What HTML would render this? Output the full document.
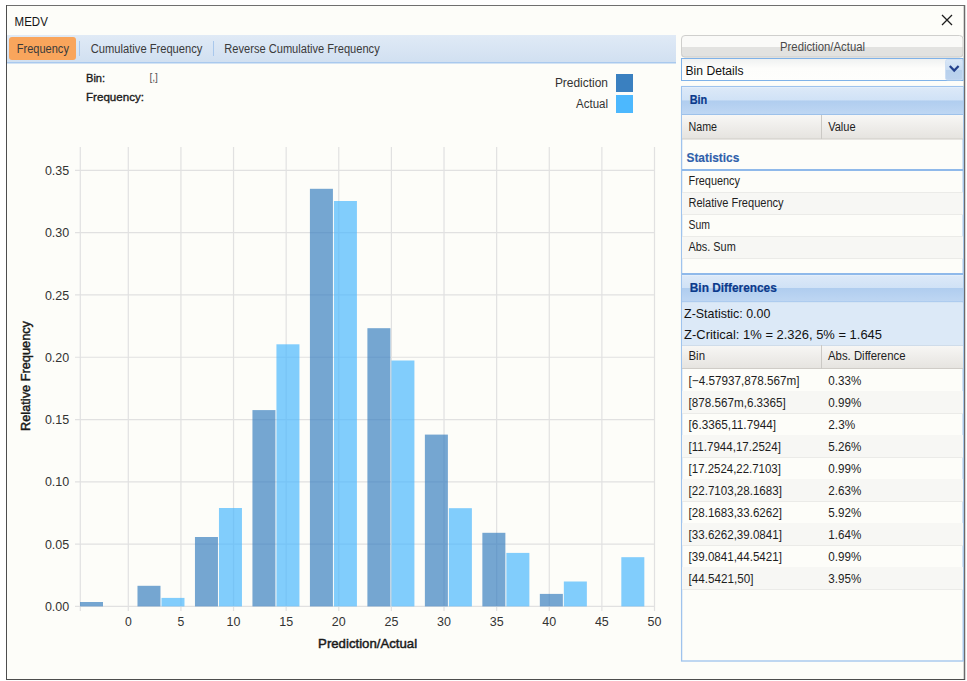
<!DOCTYPE html>
<html><head><meta charset="utf-8"><title>MEDV</title>
<style>html,body{margin:0;padding:0;background:#fff;overflow:hidden;}svg{display:block;font-family:"Liberation Sans", sans-serif;}</style>
</head><body>
<svg width="967" height="681" viewBox="0 0 967 681">
<rect x="0" y="0" width="967" height="681" fill="#ffffff" />
<rect x="6" y="5" width="959" height="675" fill="#fdfdf9" />
<line x1="6" y1="5.5" x2="965" y2="5.5" stroke="#6f6f6f" stroke-width="1" />
<line x1="6.5" y1="5" x2="6.5" y2="680" stroke="#4d4d4d" stroke-width="1" />
<line x1="964.5" y1="5" x2="964.5" y2="680" stroke="#6a6a6a" stroke-width="1.5" />
<line x1="6" y1="679.5" x2="965" y2="679.5" stroke="#4d4d4d" stroke-width="1" />
<text x="14.6" y="25.5" font-size="13" fill="#151515" font-weight="normal" text-anchor="start" textLength="33.2" lengthAdjust="spacingAndGlyphs" >MEDV</text>
<path d="M942,15 L952,25 M952,15 L942,25" stroke="#1e1e1e" stroke-width="1.3" fill="none"/>
<linearGradient id="gtab" x1="0" y1="0" x2="0" y2="1"><stop offset="0" stop-color="#e0eaf6"/><stop offset="1" stop-color="#d1e0f1"/></linearGradient>
<rect x="7" y="35" width="669" height="27" fill="url(#gtab)" />
<rect x="7" y="62" width="669" height="1.5" fill="#a9c9ee" />
<rect x="9" y="37" width="67" height="23" rx="3" ry="3" fill="#f9a55c"/>
<text x="16.8" y="52.8" font-size="12" fill="#3a3a3a" font-weight="normal" text-anchor="start" textLength="52.1" lengthAdjust="spacingAndGlyphs" >Frequency</text>
<line x1="79.5" y1="41" x2="79.5" y2="56" stroke="#a9c8ec" stroke-width="1" />
<text x="90.8" y="52.8" font-size="12" fill="#3a3a3a" font-weight="normal" text-anchor="start" textLength="111.6" lengthAdjust="spacingAndGlyphs" >Cumulative Frequency</text>
<line x1="213.5" y1="41" x2="213.5" y2="56" stroke="#a9c8ec" stroke-width="1" />
<text x="224.3" y="52.8" font-size="12" fill="#3a3a3a" font-weight="normal" text-anchor="start" textLength="155.4" lengthAdjust="spacingAndGlyphs" >Reverse Cumulative Frequency</text>
<text x="86" y="81.6" font-size="11.8" fill="#1a1a1a" font-weight="normal" text-anchor="start" textLength="19.1" lengthAdjust="spacingAndGlyphs"  stroke="#1a1a1a" stroke-width="0.35">Bin:</text>
<text x="149.4" y="81.2" font-size="11" fill="#555" font-weight="normal" text-anchor="start" textLength="8.6" lengthAdjust="spacingAndGlyphs" >[,]</text>
<text x="86" y="100.8" font-size="11.8" fill="#1a1a1a" font-weight="normal" text-anchor="start" textLength="58" lengthAdjust="spacingAndGlyphs"  stroke="#1a1a1a" stroke-width="0.35">Frequency:</text>
<rect x="616" y="74" width="17" height="18" fill="#3a80c0" />
<rect x="616" y="95" width="17" height="18" fill="#4cb8fe" />
<text x="608" y="87.3" font-size="12" fill="#333" font-weight="normal" text-anchor="end" textLength="53.1" lengthAdjust="spacingAndGlyphs" >Prediction</text>
<text x="608" y="108.4" font-size="12" fill="#333" font-weight="normal" text-anchor="end" textLength="32" lengthAdjust="spacingAndGlyphs" >Actual</text>
<line x1="128.3" y1="147" x2="128.3" y2="611" stroke="#e1e1e1" stroke-width="1.2" />
<line x1="180.92" y1="147" x2="180.92" y2="611" stroke="#e1e1e1" stroke-width="1.2" />
<line x1="233.54" y1="147" x2="233.54" y2="611" stroke="#e1e1e1" stroke-width="1.2" />
<line x1="286.16" y1="147" x2="286.16" y2="611" stroke="#e1e1e1" stroke-width="1.2" />
<line x1="338.78" y1="147" x2="338.78" y2="611" stroke="#e1e1e1" stroke-width="1.2" />
<line x1="391.4" y1="147" x2="391.4" y2="611" stroke="#e1e1e1" stroke-width="1.2" />
<line x1="444.02" y1="147" x2="444.02" y2="611" stroke="#e1e1e1" stroke-width="1.2" />
<line x1="496.64" y1="147" x2="496.64" y2="611" stroke="#e1e1e1" stroke-width="1.2" />
<line x1="549.26" y1="147" x2="549.26" y2="611" stroke="#e1e1e1" stroke-width="1.2" />
<line x1="601.88" y1="147" x2="601.88" y2="611" stroke="#e1e1e1" stroke-width="1.2" />
<line x1="654.5" y1="147" x2="654.5" y2="611" stroke="#e1e1e1" stroke-width="1.2" />
<line x1="80.3" y1="147" x2="80.3" y2="611" stroke="#e1e1e1" stroke-width="1.2" />
<line x1="75" y1="606.4" x2="654.5" y2="606.4" stroke="#e1e1e1" stroke-width="1.2" />
<line x1="75" y1="544.11" x2="654.5" y2="544.11" stroke="#e1e1e1" stroke-width="1.2" />
<line x1="75" y1="481.82" x2="654.5" y2="481.82" stroke="#e1e1e1" stroke-width="1.2" />
<line x1="75" y1="419.53" x2="654.5" y2="419.53" stroke="#e1e1e1" stroke-width="1.2" />
<line x1="75" y1="357.24" x2="654.5" y2="357.24" stroke="#e1e1e1" stroke-width="1.2" />
<line x1="75" y1="294.95" x2="654.5" y2="294.95" stroke="#e1e1e1" stroke-width="1.2" />
<line x1="75" y1="232.66" x2="654.5" y2="232.66" stroke="#e1e1e1" stroke-width="1.2" />
<line x1="75" y1="170.37" x2="654.5" y2="170.37" stroke="#e1e1e1" stroke-width="1.2" />
<rect x="80.00" y="602.0" width="23" height="4.40" fill="#3a80c0" fill-opacity="0.7"/>
<rect x="137.48" y="585.8" width="23" height="20.60" fill="#3a80c0" fill-opacity="0.7"/>
<rect x="161.48" y="597.9" width="23" height="8.50" fill="#4cb8fe" fill-opacity="0.7"/>
<rect x="194.96" y="537.0" width="23" height="69.40" fill="#3a80c0" fill-opacity="0.7"/>
<rect x="218.96" y="508.0" width="23" height="98.40" fill="#4cb8fe" fill-opacity="0.7"/>
<rect x="252.44" y="410.1" width="23" height="196.30" fill="#3a80c0" fill-opacity="0.7"/>
<rect x="276.44" y="344.3" width="23" height="262.10" fill="#4cb8fe" fill-opacity="0.7"/>
<rect x="309.92" y="188.8" width="23" height="417.60" fill="#3a80c0" fill-opacity="0.7"/>
<rect x="333.92" y="201.0" width="23" height="405.40" fill="#4cb8fe" fill-opacity="0.7"/>
<rect x="367.40" y="328.2" width="23" height="278.20" fill="#3a80c0" fill-opacity="0.7"/>
<rect x="391.40" y="360.5" width="23" height="245.90" fill="#4cb8fe" fill-opacity="0.7"/>
<rect x="424.88" y="434.6" width="23" height="171.80" fill="#3a80c0" fill-opacity="0.7"/>
<rect x="448.88" y="508.2" width="23" height="98.20" fill="#4cb8fe" fill-opacity="0.7"/>
<rect x="482.36" y="532.8" width="23" height="73.60" fill="#3a80c0" fill-opacity="0.7"/>
<rect x="506.36" y="552.9" width="23" height="53.50" fill="#4cb8fe" fill-opacity="0.7"/>
<rect x="539.84" y="593.9" width="23" height="12.50" fill="#3a80c0" fill-opacity="0.7"/>
<rect x="563.84" y="581.5" width="23" height="24.90" fill="#4cb8fe" fill-opacity="0.7"/>
<rect x="621.32" y="557.2" width="23" height="49.20" fill="#4cb8fe" fill-opacity="0.7"/>
<text x="69.2" y="611.0" font-size="13.4" fill="#333" font-weight="normal" text-anchor="end" textLength="24.3" lengthAdjust="spacingAndGlyphs" >0.00</text>
<text x="69.2" y="548.71" font-size="13.4" fill="#333" font-weight="normal" text-anchor="end" textLength="24.3" lengthAdjust="spacingAndGlyphs" >0.05</text>
<text x="69.2" y="486.42" font-size="13.4" fill="#333" font-weight="normal" text-anchor="end" textLength="24.3" lengthAdjust="spacingAndGlyphs" >0.10</text>
<text x="69.2" y="424.13" font-size="13.4" fill="#333" font-weight="normal" text-anchor="end" textLength="24.3" lengthAdjust="spacingAndGlyphs" >0.15</text>
<text x="69.2" y="361.84" font-size="13.4" fill="#333" font-weight="normal" text-anchor="end" textLength="24.3" lengthAdjust="spacingAndGlyphs" >0.20</text>
<text x="69.2" y="299.55" font-size="13.4" fill="#333" font-weight="normal" text-anchor="end" textLength="24.3" lengthAdjust="spacingAndGlyphs" >0.25</text>
<text x="69.2" y="237.26" font-size="13.4" fill="#333" font-weight="normal" text-anchor="end" textLength="24.3" lengthAdjust="spacingAndGlyphs" >0.30</text>
<text x="69.2" y="174.97" font-size="13.4" fill="#333" font-weight="normal" text-anchor="end" textLength="24.3" lengthAdjust="spacingAndGlyphs" >0.35</text>
<text x="128.3" y="625.9" font-size="12.2" fill="#333" font-weight="normal" text-anchor="middle" textLength="6.8" lengthAdjust="spacingAndGlyphs" >0</text>
<text x="180.92" y="625.9" font-size="12.2" fill="#333" font-weight="normal" text-anchor="middle" textLength="6.8" lengthAdjust="spacingAndGlyphs" >5</text>
<text x="233.54" y="625.9" font-size="12.2" fill="#333" font-weight="normal" text-anchor="middle" textLength="13.9" lengthAdjust="spacingAndGlyphs" >10</text>
<text x="286.16" y="625.9" font-size="12.2" fill="#333" font-weight="normal" text-anchor="middle" textLength="13.9" lengthAdjust="spacingAndGlyphs" >15</text>
<text x="338.78" y="625.9" font-size="12.2" fill="#333" font-weight="normal" text-anchor="middle" textLength="13.9" lengthAdjust="spacingAndGlyphs" >20</text>
<text x="391.4" y="625.9" font-size="12.2" fill="#333" font-weight="normal" text-anchor="middle" textLength="13.9" lengthAdjust="spacingAndGlyphs" >25</text>
<text x="444.02" y="625.9" font-size="12.2" fill="#333" font-weight="normal" text-anchor="middle" textLength="13.9" lengthAdjust="spacingAndGlyphs" >30</text>
<text x="496.64" y="625.9" font-size="12.2" fill="#333" font-weight="normal" text-anchor="middle" textLength="13.9" lengthAdjust="spacingAndGlyphs" >35</text>
<text x="549.26" y="625.9" font-size="12.2" fill="#333" font-weight="normal" text-anchor="middle" textLength="13.9" lengthAdjust="spacingAndGlyphs" >40</text>
<text x="601.88" y="625.9" font-size="12.2" fill="#333" font-weight="normal" text-anchor="middle" textLength="13.9" lengthAdjust="spacingAndGlyphs" >45</text>
<text x="654.5" y="625.9" font-size="12.2" fill="#333" font-weight="normal" text-anchor="middle" textLength="13.9" lengthAdjust="spacingAndGlyphs" >50</text>
<text x="318.1" y="648.4" font-size="13" fill="#1a1a1a" font-weight="normal" text-anchor="start" textLength="99" lengthAdjust="spacingAndGlyphs"  stroke="#1a1a1a" stroke-width="0.45">Prediction/Actual</text>
<text transform="translate(30.2,431) rotate(-90)" x="0" y="0" font-size="13" fill="#1a1a1a" stroke="#1a1a1a" stroke-width="0.45" textLength="110" lengthAdjust="spacingAndGlyphs">Relative Frequency</text>
<defs><linearGradient id="gbin" x1="0" y1="0" x2="0" y2="1"><stop offset="0" stop-color="#dde9f8"/><stop offset="0.48" stop-color="#d0e2f6"/><stop offset="0.5" stop-color="#b0cdef"/><stop offset="1" stop-color="#bfd7f3"/></linearGradient><linearGradient id="ghdr" x1="0" y1="0" x2="0" y2="1"><stop offset="0" stop-color="#f8f7f5"/><stop offset="1" stop-color="#e5e3df"/></linearGradient><linearGradient id="gdd" x1="0" y1="0" x2="0" y2="1"><stop offset="0" stop-color="#d9e7f7"/><stop offset="0.5" stop-color="#c9dcf2"/><stop offset="0.5" stop-color="#b7d0ec"/><stop offset="1" stop-color="#bcd3ee"/></linearGradient></defs>
<clipPath id="chb"><rect x="681" y="35" width="282.5" height="22.5" rx="3.5"/></clipPath>
<g clip-path="url(#chb)"><rect x="681" y="35" width="283" height="23" fill="#fafaf8"/><rect x="681" y="47" width="283" height="11" fill="#e2e2e0"/></g>
<rect x="681.5" y="35.5" width="281.5" height="21.5" rx="3.5" fill="none" stroke="#cfcfcd" stroke-width="1"/>
<text x="780" y="50.7" font-size="12" fill="#4a4a4a" font-weight="normal" text-anchor="start" textLength="85" lengthAdjust="spacingAndGlyphs" >Prediction/Actual</text>
<linearGradient id="gcb" x1="0" y1="0" x2="0" y2="1"><stop offset="0" stop-color="#eff1f1"/><stop offset="0.45" stop-color="#fdfdfb"/><stop offset="1" stop-color="#fefefc"/></linearGradient>
<rect x="681.5" y="58.5" width="281.5" height="22" fill="url(#gcb)" stroke="#7fb2e8" stroke-width="1"/>
<rect x="945.5" y="59.5" width="17" height="20.5" rx="2" fill="url(#gdd)" stroke="#c9dcf2" stroke-width="0.8"/>
<polyline points="949.8,66 954.2,70.6 958.6,66" fill="none" stroke="#23408c" stroke-width="2.2"/>
<text x="685.5" y="74.5" font-size="12.3" fill="#111" font-weight="normal" text-anchor="start" textLength="58" lengthAdjust="spacingAndGlyphs" >Bin Details</text>
<rect x="681.6" y="86.6" width="281.6" height="574.4" fill="#fdfdf9" stroke="#9fc3ed" stroke-width="1.3"/>
<rect x="682" y="87" width="281" height="27.5" fill="url(#gbin)" />
<rect x="682" y="87" width="281" height="1" fill="#e3eefa" />
<line x1="682" y1="114.5" x2="963" y2="114.5" stroke="#9dc1ea" stroke-width="1" />
<text x="689.7" y="104.2" font-size="12" fill="#0b3a8c" font-weight="bold" text-anchor="start" textLength="17.6" lengthAdjust="spacingAndGlyphs"  stroke="#0b3a8c" stroke-width="0.2">Bin</text>
<rect x="682" y="115" width="281" height="24" fill="url(#ghdr)" />
<line x1="682" y1="139" x2="963" y2="139" stroke="#cfccc7" stroke-width="1" />
<line x1="821.5" y1="115" x2="821.5" y2="139" stroke="#cbc9c5" stroke-width="1" />
<text x="688.5" y="130.7" font-size="12.3" fill="#1e1e1e" font-weight="normal" text-anchor="start" textLength="28.5" lengthAdjust="spacingAndGlyphs" >Name</text>
<text x="828.2" y="130.8" font-size="12.3" fill="#1e1e1e" font-weight="normal" text-anchor="start" textLength="27.4" lengthAdjust="spacingAndGlyphs" >Value</text>
<text x="686.5" y="161.8" font-size="12" fill="#2f5fab" font-weight="bold" text-anchor="start" textLength="52.8" lengthAdjust="spacingAndGlyphs"  stroke="#2f5fab" stroke-width="0.15">Statistics</text>
<rect x="682" y="169" width="281" height="2" fill="#8fb9ea" />
<line x1="682" y1="192.5" x2="963" y2="192.5" stroke="#ebebe8" stroke-width="1" />
<text x="688.5" y="185.2" font-size="12.3" fill="#1e1e1e" font-weight="normal" text-anchor="start" textLength="51.5" lengthAdjust="spacingAndGlyphs" >Frequency</text>
<rect x="682" y="193" width="281" height="21" fill="#f7f7f4" />
<line x1="682" y1="214.5" x2="963" y2="214.5" stroke="#ebebe8" stroke-width="1" />
<text x="688.5" y="207.2" font-size="12.3" fill="#1e1e1e" font-weight="normal" text-anchor="start" textLength="95.1" lengthAdjust="spacingAndGlyphs" >Relative Frequency</text>
<line x1="682" y1="236.5" x2="963" y2="236.5" stroke="#ebebe8" stroke-width="1" />
<text x="688.5" y="229.2" font-size="12.3" fill="#1e1e1e" font-weight="normal" text-anchor="start" textLength="21.5" lengthAdjust="spacingAndGlyphs" >Sum</text>
<rect x="682" y="237" width="281" height="21" fill="#f7f7f4" />
<line x1="682" y1="258.5" x2="963" y2="258.5" stroke="#ebebe8" stroke-width="1" />
<text x="688.5" y="251.2" font-size="12.3" fill="#1e1e1e" font-weight="normal" text-anchor="start" textLength="47.2" lengthAdjust="spacingAndGlyphs" >Abs. Sum</text>
<rect x="682" y="273" width="281" height="2" fill="#8fb9ea" />
<rect x="682" y="275" width="281" height="27" fill="url(#gbin)" />
<rect x="682" y="275" width="281" height="1" fill="#e3eefa" />
<line x1="682" y1="302" x2="963" y2="302" stroke="#9dc1ea" stroke-width="1" />
<text x="689.8" y="292.2" font-size="12" fill="#0b3a8c" font-weight="bold" text-anchor="start" textLength="87" lengthAdjust="spacingAndGlyphs"  stroke="#0b3a8c" stroke-width="0.2">Bin Differences</text>
<rect x="682" y="302.5" width="281" height="42.5" fill="#dce9f7" />
<text x="684.1" y="318.2" font-size="12.8" fill="#111" font-weight="normal" text-anchor="start" textLength="86.3" lengthAdjust="spacingAndGlyphs" >Z-Statistic: 0.00</text>
<text x="684.1" y="338.8" font-size="12.8" fill="#111" font-weight="normal" text-anchor="start" textLength="197.9" lengthAdjust="spacingAndGlyphs" >Z-Critical: 1% = 2.326, 5% = 1.645</text>
<rect x="682" y="345" width="281" height="24" fill="url(#ghdr)" />
<line x1="682" y1="345.5" x2="963" y2="345.5" stroke="#cfdcea" stroke-width="1" />
<line x1="682" y1="368.5" x2="963" y2="368.5" stroke="#cfccc7" stroke-width="1" />
<line x1="821.5" y1="345" x2="821.5" y2="369" stroke="#cbc9c5" stroke-width="1" />
<text x="688.5" y="360" font-size="12.3" fill="#1e1e1e" font-weight="normal" text-anchor="start" textLength="16.5" lengthAdjust="spacingAndGlyphs" >Bin</text>
<text x="828" y="360" font-size="12.3" fill="#1e1e1e" font-weight="normal" text-anchor="start" textLength="77.5" lengthAdjust="spacingAndGlyphs" >Abs. Difference</text>
<line x1="682" y1="391.5" x2="963" y2="391.5" stroke="#ebebe8" stroke-width="1" />
<text x="688.6" y="384.6" font-size="12.3" fill="#1e1e1e" font-weight="normal" text-anchor="start" textLength="111" lengthAdjust="spacingAndGlyphs" >[−4.57937,878.567m]</text>
<text x="828.3" y="384.6" font-size="12.3" fill="#1e1e1e" font-weight="normal" text-anchor="start" textLength="33" lengthAdjust="spacingAndGlyphs" >0.33%</text>
<rect x="682" y="391" width="281" height="22" fill="#f7f7f4" />
<line x1="682" y1="413.5" x2="963" y2="413.5" stroke="#ebebe8" stroke-width="1" />
<text x="688.6" y="406.6" font-size="12.3" fill="#1e1e1e" font-weight="normal" text-anchor="start" textLength="97.2" lengthAdjust="spacingAndGlyphs" >[878.567m,6.3365]</text>
<text x="828.3" y="406.6" font-size="12.3" fill="#1e1e1e" font-weight="normal" text-anchor="start" textLength="33" lengthAdjust="spacingAndGlyphs" >0.99%</text>
<line x1="682" y1="435.5" x2="963" y2="435.5" stroke="#ebebe8" stroke-width="1" />
<text x="688.6" y="428.6" font-size="12.3" fill="#1e1e1e" font-weight="normal" text-anchor="start" textLength="87.5" lengthAdjust="spacingAndGlyphs" >[6.3365,11.7944]</text>
<text x="828.3" y="428.6" font-size="12.3" fill="#1e1e1e" font-weight="normal" text-anchor="start" textLength="26.9" lengthAdjust="spacingAndGlyphs" >2.3%</text>
<rect x="682" y="435" width="281" height="22" fill="#f7f7f4" />
<line x1="682" y1="457.5" x2="963" y2="457.5" stroke="#ebebe8" stroke-width="1" />
<text x="688.6" y="450.6" font-size="12.3" fill="#1e1e1e" font-weight="normal" text-anchor="start" textLength="92.3" lengthAdjust="spacingAndGlyphs" >[11.7944,17.2524]</text>
<text x="828.3" y="450.6" font-size="12.3" fill="#1e1e1e" font-weight="normal" text-anchor="start" textLength="33" lengthAdjust="spacingAndGlyphs" >5.26%</text>
<line x1="682" y1="479.5" x2="963" y2="479.5" stroke="#ebebe8" stroke-width="1" />
<text x="688.6" y="472.6" font-size="12.3" fill="#1e1e1e" font-weight="normal" text-anchor="start" textLength="92.3" lengthAdjust="spacingAndGlyphs" >[17.2524,22.7103]</text>
<text x="828.3" y="472.6" font-size="12.3" fill="#1e1e1e" font-weight="normal" text-anchor="start" textLength="33" lengthAdjust="spacingAndGlyphs" >0.99%</text>
<rect x="682" y="479" width="281" height="22" fill="#f7f7f4" />
<line x1="682" y1="501.5" x2="963" y2="501.5" stroke="#ebebe8" stroke-width="1" />
<text x="688.6" y="494.6" font-size="12.3" fill="#1e1e1e" font-weight="normal" text-anchor="start" textLength="93.3" lengthAdjust="spacingAndGlyphs" >[22.7103,28.1683]</text>
<text x="828.3" y="494.6" font-size="12.3" fill="#1e1e1e" font-weight="normal" text-anchor="start" textLength="33" lengthAdjust="spacingAndGlyphs" >2.63%</text>
<line x1="682" y1="523.5" x2="963" y2="523.5" stroke="#ebebe8" stroke-width="1" />
<text x="688.6" y="516.6" font-size="12.3" fill="#1e1e1e" font-weight="normal" text-anchor="start" textLength="93.3" lengthAdjust="spacingAndGlyphs" >[28.1683,33.6262]</text>
<text x="828.3" y="516.6" font-size="12.3" fill="#1e1e1e" font-weight="normal" text-anchor="start" textLength="33" lengthAdjust="spacingAndGlyphs" >5.92%</text>
<rect x="682" y="523" width="281" height="22" fill="#f7f7f4" />
<line x1="682" y1="545.5" x2="963" y2="545.5" stroke="#ebebe8" stroke-width="1" />
<text x="688.6" y="538.6" font-size="12.3" fill="#1e1e1e" font-weight="normal" text-anchor="start" textLength="93.3" lengthAdjust="spacingAndGlyphs" >[33.6262,39.0841]</text>
<text x="828.3" y="538.6" font-size="12.3" fill="#1e1e1e" font-weight="normal" text-anchor="start" textLength="33" lengthAdjust="spacingAndGlyphs" >1.64%</text>
<line x1="682" y1="567.5" x2="963" y2="567.5" stroke="#ebebe8" stroke-width="1" />
<text x="688.6" y="560.6" font-size="12.3" fill="#1e1e1e" font-weight="normal" text-anchor="start" textLength="93.3" lengthAdjust="spacingAndGlyphs" >[39.0841,44.5421]</text>
<text x="828.3" y="560.6" font-size="12.3" fill="#1e1e1e" font-weight="normal" text-anchor="start" textLength="33" lengthAdjust="spacingAndGlyphs" >0.99%</text>
<rect x="682" y="567" width="281" height="22" fill="#f7f7f4" />
<line x1="682" y1="589.5" x2="963" y2="589.5" stroke="#ebebe8" stroke-width="1" />
<text x="688.6" y="582.6" font-size="12.3" fill="#1e1e1e" font-weight="normal" text-anchor="start" textLength="64.9" lengthAdjust="spacingAndGlyphs" >[44.5421,50]</text>
<text x="828.3" y="582.6" font-size="12.3" fill="#1e1e1e" font-weight="normal" text-anchor="start" textLength="33" lengthAdjust="spacingAndGlyphs" >3.95%</text>
</svg>
</body></html>
